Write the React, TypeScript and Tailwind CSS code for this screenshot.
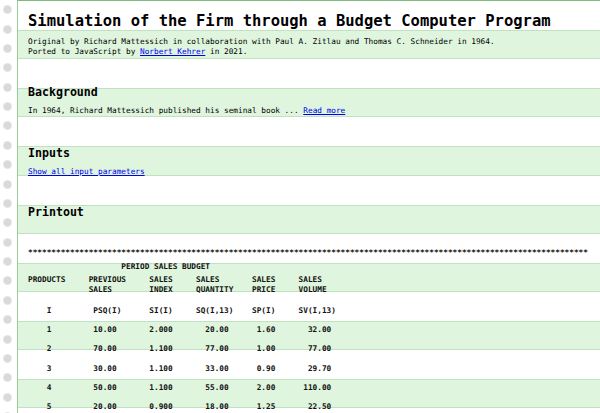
import React from 'react'

// place each text at its character column, like a fixed-width printer line
function cols(parts: [number, string][]) {
  let s = ''
  for (const [c, t] of parts) s = s.padEnd(c, ' ') + t
  return s
}

const rows = [
  ['1', '10.00', '2.000', '20.00', '1.60', '32.00'],
  ['2', '70.00', '1.100', '77.00', '1.00', '77.00'],
  ['3', '30.00', '1.100', '33.00', '0.90', '29.70'],
  ['4', '50.00', '1.100', '55.00', '2.00', '110.00'],
  ['5', '20.00', '0.900', '18.00', '1.25', '22.50'],
]

const fmt = (r: string[]) =>
  r[0].padStart(5) +
  r[1].padStart(14) +
  r[2].padStart(12) +
  r[3].padStart(12) +
  r[4].padStart(10) +
  r[5].padStart(12)

export default function App() {
  const holes = Array.from({ length: 22 })

  return (
    <div className="flex h-[413px] overflow-hidden bg-white font-['DejaVu_Sans_Mono','Liberation_Mono',monospace] text-black">
      {/* Tractor feed holes */}
      <div className="flex w-[17px] shrink-0 flex-col">
        {holes.map((_, i) => (
          <div key={i} className="flex h-[19.39px] shrink-0 items-center pl-[4px]">
            <div className="h-[7px] w-[7px] rounded-full bg-[#d9d9d9] ring-1 ring-[#e6e6e6]" />
          </div>
        ))}
      </div>

      {/* Green bar paper */}
      <div className="min-w-0 flex-1 border-l border-t border-l-[#9acb98] border-t-[#7fba7d] bg-[image:repeating-linear-gradient(to_bottom,#fff_0px,#fff_29.08px,#c1e2c0_29.08px,#c1e2c0_30.08px,#dff5de_30.08px,#dff5de_57.17px,#c1e2c0_57.17px,#c1e2c0_58.17px)] pl-[10px] pt-[11.3px] text-[7.75px] leading-[10px]">
        <h1 className="whitespace-nowrap text-[15.5px] font-bold leading-[18px]">
          Simulation of the Firm through a Budget Computer Program
        </h1>

        <p className="mt-[6.4px] whitespace-nowrap">
          Original by Richard Mattessich in collaboration with Paul A. Zitlau and Thomas C. Schneider in 1964.
          <br />
          Ported to JavaScript by{' '}
          <a href="#" className="text-[#0000ee] underline">
            Norbert Kehrer
          </a>{' '}
          in 2021.
        </p>

        <h2 className="mt-[28.3px] text-[11.6px] font-bold leading-[14px]">Background</h2>
        <p className="mt-[7px] whitespace-nowrap">
          In 1964, Richard Mattessich published his seminal book ...{' '}
          <a href="#" className="text-[#0000ee] underline">
            Read more
          </a>
        </p>

        <h2 className="mt-[29.7px] text-[11.6px] font-bold leading-[14px]">Inputs</h2>
        <p className="mt-[7px]">
          <a href="#" className="text-[#0000ee] underline">
            Show all input parameters
          </a>
        </p>

        <h2 className="mt-[28.3px] text-[11.6px] font-bold leading-[14px]">Printout</h2>

        {/* Printout */}
        <div className="whitespace-pre font-bold text-[#111]">
          <div className="mt-[28.7px]">{'*'.repeat(120)}</div>
          <div className="mt-[4.1px]">{cols([[20, 'PERIOD SALES BUDGET']])}</div>
          <div className="mt-[3.7px]">
            {cols([[0, 'PRODUCTS'], [13, 'PREVIOUS'], [26, 'SALES'], [36, 'SALES'], [48, 'SALES'], [58, 'SALES']])}
          </div>
          <div>{cols([[13, 'SALES'], [26, 'INDEX'], [36, 'QUANTITY'], [48, 'PRICE'], [58, 'VOLUME']])}</div>
          <div className="mt-[5.5px] h-[19.2px] leading-[19.2px]">
            {cols([[4, 'I'], [14, 'PSQ(I)'], [26, 'SI(I)'], [36, 'SQ(I,13)'], [48, 'SP(I)'], [58, 'SV(I,13)']])}
          </div>
          {rows.map((r) => (
            <div key={r[0]} className="h-[19.2px] leading-[19.2px]">
              {fmt(r)}
            </div>
          ))}
        </div>
      </div>
    </div>
  )
}
